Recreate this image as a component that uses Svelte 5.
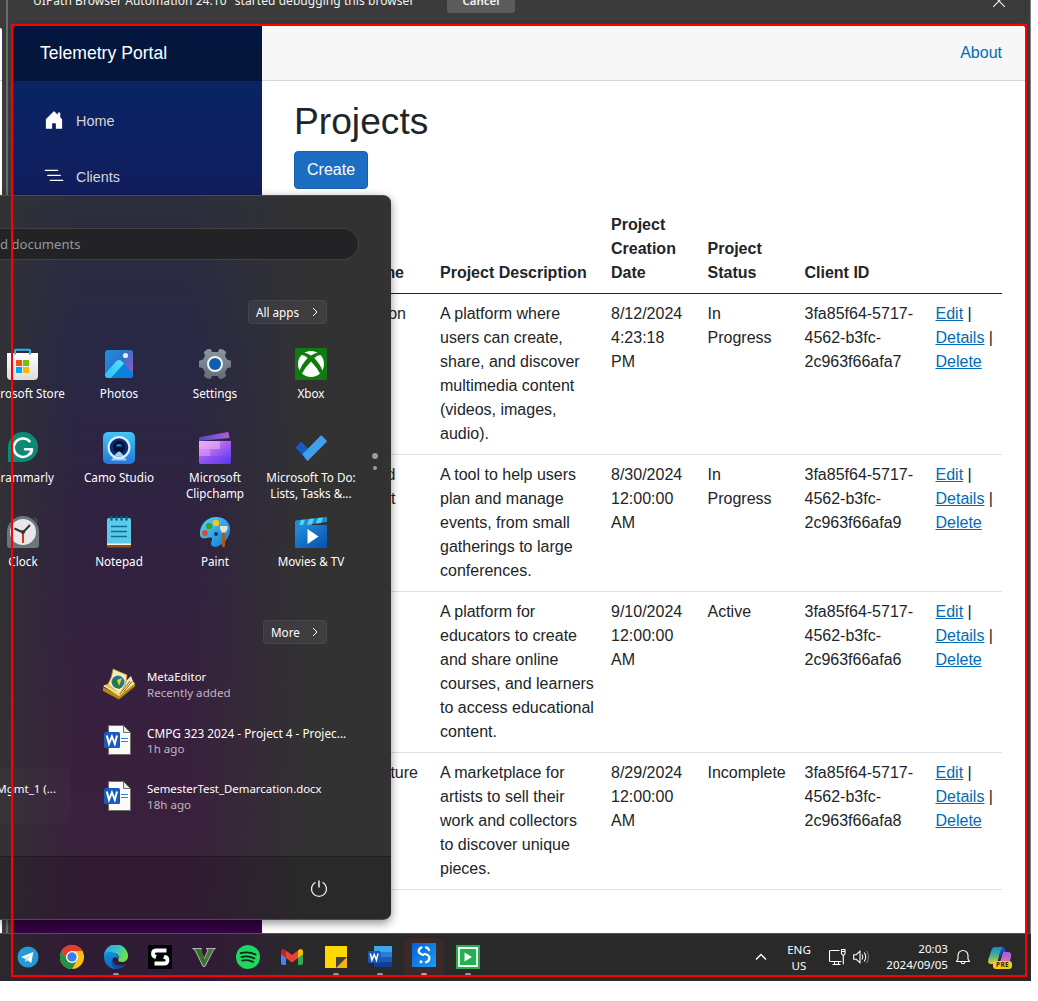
<script>
  const nav = [
    { label: 'Home', d: 'M6.5 14.5v-3.505c0-.245.25-.495.5-.495h2c.25 0 .5.25.5.5v3.5a.5.5 0 0 0 .5.5h4a.5.5 0 0 0 .5-.5v-7a.5.5 0 0 0-.146-.354L13 5.793V2.5a.5.5 0 0 0-.5-.5h-1a.5.5 0 0 0-.5.5v1.293L8.354 1.146a.5.5 0 0 0-.708 0l-6 6A.5.5 0 0 0 1.5 7.5v7a.5.5 0 0 0 .5.5h4a.5.5 0 0 0 .5-.5Z' },
    { label: 'Clients', d: 'M4.5 11.5A.5.5 0 0 1 5 11h10a.5.5 0 0 1 0 1H5a.5.5 0 0 1-.5-.5zm-2-4A.5.5 0 0 1 3 7h10a.5.5 0 0 1 0 1H3a.5.5 0 0 1-.5-.5zm-2-4A.5.5 0 0 1 1 3h10a.5.5 0 0 1 0 1H1a.5.5 0 0 1-.5-.5z' },
  ];

  // `inset` is the free space to the right of the name inside its cell
  const projects = [
    { name: ['on'], inset: 26, desc: 'A platform where users can create, share, and discover multimedia content (videos, images, audio).', date: '8/12/2024 4:23:18 PM', status: 'In Progress', client: '3fa85f64-5717-4562-b3fc-2c963f66afa7' },
    { name: ['d', 't'], inset: 36.5, desc: 'A tool to help users plan and manage events, from small gatherings to large conferences.', date: '8/30/2024 12:00:00 AM', status: 'In Progress', client: '3fa85f64-5717-4562-b3fc-2c963f66afa9' },
    { name: [], inset: 0, desc: 'A platform for educators to create and share online courses, and learners to access educational content.', date: '9/10/2024 12:00:00 AM', status: 'Active', client: '3fa85f64-5717-4562-b3fc-2c963f66afa6' },
    { name: ['ture'], inset: 14, desc: 'A marketplace for artists to sell their work and collectors to\u00a0discover unique pieces.', date: '8/29/2024 12:00:00 AM', status: 'Incomplete', client: '3fa85f64-5717-4562-b3fc-2c963f66afa8' },
  ];

  const apps = [
    ['store', 'Microsoft Store'], ['photos', 'Photos'], ['settings', 'Settings'], ['xbox', 'Xbox'],
    ['grammarly', 'Grammarly'], ['camo', 'Camo Studio'], ['clipchamp', 'Microsoft Clipchamp'], ['todo', 'Microsoft To Do: Lists, Tasks &...'],
    ['clock', 'Clock'], ['notepad', 'Notepad'], ['paint', 'Paint'], ['movies', 'Movies & TV'],
  ];

  const recent = [
    ['meta', 'MetaEditor', 'Recently added'],
    ['doc', 'CMPG 323 2024 - Project 4 - Projec...', '1h ago'],
    ['doc', 'SemesterTest_Demarcation.docx', '18h ago'],
  ];

  const pinned = [
    { icon: 'telegram' }, { icon: 'chrome' }, { icon: 'edge', open: true }, { icon: 'sbox' }, { icon: 'gta' }, { icon: 'spotify' },
    { icon: 'gmail' }, { icon: 'notes', open: true }, { icon: 'word', open: true }, { icon: 'studio', open: true, active: true }, { icon: 'robot', open: true },
  ];
</script>

{#snippet icon(name)}
  {#if name === 'store'}
    <svg viewBox="0 0 32 32">
      <defs><linearGradient id="st" x1="0" y1="0" x2="0" y2="1"><stop offset="0" stop-color="#fff" /><stop offset="1" stop-color="#dcdcdc" /></linearGradient></defs>
      <path d="M0 5h31v23a4 4 0 0 1-4 4H4a4 4 0 0 1-4-4z" fill="url(#st)" />
      <path d="M8 6.500V2.500q0-.7.7-.7h13.600q.7 0 .7.700v4" fill="none" stroke="#2bb5f0" stroke-width="2" />
      <path d="M9 12h6v6H9z" fill="#f25022" /><path d="M16 12h6v6h-6z" fill="#7fba00" /><path d="M9 19h6v6H9z" fill="#00a4ef" /><path d="M16 19h6v6h-6z" fill="#ffb900" />
    </svg>
  {:else if name === 'photos'}
    <svg viewBox="0 0 32 32">
      <defs>
        <linearGradient id="ph" x1="0" y1="0" x2="1" y2=".6"><stop offset="0" stop-color="#1c8fe0" /><stop offset=".6" stop-color="#2d74ca" /><stop offset="1" stop-color="#8a5cc4" /></linearGradient>
        <linearGradient id="pm" x1="0" y1="1" x2="1" y2="0"><stop offset="0" stop-color="#22c4f4" /><stop offset="1" stop-color="#5fdcff" /></linearGradient>
        <clipPath id="pc"><rect x="2" y="2" width="28" height="28" rx="3" /></clipPath>
      </defs>
      <g clip-path="url(#pc)">
        <path d="M2 2h28v28H2z" fill="url(#ph)" />
        <path d="M6 30 14.500 13q1.500-1.500 3.500 0L30 25v5z" fill="#0a7fdb" />
        <path d="M2 26 13.500 13q2.500-2.200 5 0l2.500 2.500L8 30H2z" fill="url(#pm)" />
        <circle cx="22.500" cy="7.500" r="2.600" fill="#f3e8fb" />
      </g>
    </svg>
  {:else if name === 'settings'}
    <svg viewBox="0 0 32 32">
      <defs><linearGradient id="se" x1="0" y1="0" x2="0" y2="1"><stop offset="0" stop-color="#8b969e" /><stop offset="1" stop-color="#626d76" /></linearGradient></defs>
      <path d="M8 1.500 11 1q1 0 1.400 1.200L13 4h6l.6-1.800Q20 1 21 1l3 .6 2.500 1.800q.8.600.4 1.600L26 8l2.500 4 2.500.2q1 .2 1 1.200v5q0 1-1 1.200l-2.500.4L26 24l.9 3q.3 1-.5 1.600L24 30.500l-3 .5q-1 0-1.400-1.200L19 28h-6l-.6 1.800Q12 31 11 31l-3-.5-2.500-1.900q-.8-.6-.5-1.600L6 24l-2.500-4L1 19.600q-1-.2-1-1.200v-5q0-1 1-1.200l2.500-.2L6 8l-.9-3q-.4-1 .4-1.600z" fill="url(#se)" />
      <circle cx="16" cy="16" r="8" fill="#f1f3f5" /><circle cx="16" cy="16" r="6" fill="#0f5fae" />
    </svg>
  {:else if name === 'xbox'}
    <svg viewBox="0 0 32 32">
      <rect width="32" height="32" rx="2" fill="#107c10" />
      <circle cx="16" cy="16" r="13" fill="#fff" />
      <path d="M7 5Q11 4 16 7.500 21 4 25 5l2.300 2.300Q23.500 6 19.300 10 25.500 16.500 27.500 23l-2.300 3Q22 19.500 16 13.500 10 19.500 6.800 26l-2.300-3Q6.500 16.500 12.700 10 8.500 6 4.700 7.300z" fill="#107c10" />
    </svg>
  {:else if name === 'grammarly'}
    <svg viewBox="0 0 32 32">
      <path d="M1 30V15A15 15 0 1 1 16 30z" fill="#0d8a75" />
      <path d="M22.600 9.300A9.200 9.200 0 1 0 25 17.300h-7M21.500 17.300h3.500q-.3 2.600-1.300 4.200" fill="none" stroke="#fff" stroke-width="2.500" stroke-linecap="round" stroke-linejoin="round" />
    </svg>
  {:else if name === 'camo'}
    <svg viewBox="0 0 32 32">
      <defs><linearGradient id="ca" x1="0" y1="0" x2="0" y2="1"><stop offset="0" stop-color="#44c5f6" /><stop offset="1" stop-color="#2377dc" /></linearGradient></defs>
      <rect width="32" height="32" rx="5" fill="url(#ca)" />
      <path d="M8 28.500 10.500 25h11l2.500 3.500z" fill="#9ccdf5" />
      <circle cx="16" cy="15.500" r="11.500" fill="#d8efff" /><circle cx="16" cy="15.500" r="9.300" fill="#0b2a78" />
      <circle cx="16" cy="15" r="6" fill="#07112f" /><path d="M13 14.500a3 2.500 0 0 1 6 0z" fill="#1a87c9" />
      <path d="M11.500 23.500q1-2 2.500-2.500 0-1.500 2-1.500t2 1.500q1.500.5 2.500 2.500-4 2.500-9 0z" fill="#9ccdf5" />
    </svg>
  {:else if name === 'clipchamp'}
    <svg viewBox="0 0 32 32">
      <defs>
        <linearGradient id="cl" x1="0" y1="0" x2="1" y2="1"><stop offset="0" stop-color="#eda5f6" /><stop offset=".5" stop-color="#a45ff0" /><stop offset="1" stop-color="#5330ef" /></linearGradient>
        <linearGradient id="ct" x1="0" y1="0" x2="1" y2="0"><stop offset="0" stop-color="#5148d8" /><stop offset="1" stop-color="#b25bd8" /></linearGradient>
      </defs>
      <path d="M0 9V7q0-1.500 2-2L27.500.2q2-.4 2.300 1.300l.7 4.500z" fill="url(#ct)" />
      <path d="M0 9h32v21a2 2 0 0 1-2 2H2a2 2 0 0 1-2-2z" fill="url(#cl)" />
      <path d="M0 9h21v8H0z" fill="#f3b5fb" opacity=".55" /><path d="M0 17h11v7H0z" fill="#d990fa" opacity=".65" />
      <path d="M0 24h32v6a2 2 0 0 1-2 2H2a2 2 0 0 1-2-2z" fill="#6a3ff0" opacity=".35" />
    </svg>
  {:else if name === 'todo'}
    <svg viewBox="0 0 32 32">
      <path d="M.5 15.500 5.500 10.300q.7-.6 1.400 0L16 19.500l-3.500 9.200z" fill="#185abd" />
      <path d="m7.500 22.300 18-18.500q.7-.6 1.400 0l4.600 4.800q.6.700 0 1.400L13.200 28.600q-.7.600-1.400 0z" fill="#41a0ec" />
    </svg>
  {:else if name === 'clock'}
    <svg viewBox="0 0 32 32">
      <path d="M0 16A16 16 0 0 1 32 16v13a3 3 0 0 1-3 3H3a3 3 0 0 1-3-3z" fill="#6c757d" />
      <path d="m26 1 4 1 1 4-2 1z" fill="#454545" /><circle cx="16" cy="16" r="13" fill="#e7e8e9" />
      <path d="m7.500 12.500 8.500 4 7-7.500" fill="none" stroke="#333" stroke-width="2" /><path d="M16 16v11" stroke="#d8380e" stroke-width="2" /><circle cx="16" cy="16" r="2" fill="#333" />
    </svg>
  {:else if name === 'notepad'}
    <svg viewBox="0 0 32 32">
      <path d="M4 28h24v2a1.500 1.500 0 0 1-1.500 1.500h-21A1.500 1.500 0 0 1 4 30z" fill="#93500f" /><path d="M4 26h24v3H4z" fill="#f6efe6" />
      <path d="M4 4a2 2 0 0 1 2-2h20a2 2 0 0 1 2 2v23.500H4z" fill="#5fcae8" />
      <path d="M8 10.500h16M8 15.500h16M8 20.500h16" stroke="#0a6f98" stroke-width="1.700" />
      <path d="M8.500 1v2.500M13.500 1v2.500M18.500 1v2.500M23.500 1v2.500" stroke="#0b5f82" stroke-width="2.400" stroke-linecap="round" />
    </svg>
  {:else if name === 'paint'}
    <svg viewBox="0 0 32 32">
      <defs><linearGradient id="pa" x1="0" y1="0" x2="1" y2="1"><stop offset="0" stop-color="#5bd6fa" /><stop offset="1" stop-color="#0a77d5" /></linearGradient></defs>
      <path d="M1 19C0 9 8 1 17 1s15 6 14 14-7 14-14 16c-5 0-6-3-4-7 1-3-2-3-5-2-4 1-6.500 0-7-3z" fill="url(#pa)" />
      <circle cx="6" cy="17" r="3" fill="#d8502b" /><circle cx="10" cy="10" r="3.100" fill="#36a11c" /><circle cx="17" cy="7" r="3.200" fill="#fcc419" /><circle cx="17" cy="18" r="2" fill="#17355c" />
      <path d="M23 17h3v13.500q-1.500 1.500-3 0z" fill="#a65a14" /><path d="M21 10h7.500v3l-2 3.500h-3.500l-2-3.500z" fill="#f0e0c5" />
    </svg>
  {:else if name === 'movies'}
    <svg viewBox="0 0 32 32">
      <defs><linearGradient id="mo" x1="0" y1="0" x2="1" y2="1"><stop offset="0" stop-color="#2590e0" /><stop offset="1" stop-color="#084fae" /></linearGradient></defs>
      <path d="M0 6q0-1.500 2-1.700L32 1v5L3 10l-3 3z" fill="#1f8cd0" />
      <path d="m6 4 4-.5-2 6-4 .5zM14 3l5-.5-2 6-5 .5zM23 2l5-.5L26 7l-5 .5z" fill="#52d1fa" />
      <path d="M0 12.500 4 9h28v21.500q0 1.500-1.500 1.500h-29Q0 32 0 30.500z" fill="url(#mo)" />
      <path d="m12.500 13 11 7.500-11 7.500z" fill="#fff" />
    </svg>
  {:else if name === 'meta'}
    <svg viewBox="0 0 32 32">
      <path d="m0 19 16 8 16-12v3.500L16 31.500 0 23z" fill="#b8860b" /><path d="m0 17.500 10-3 18-3 4 4-16 13z" fill="#e5c95a" />
      <path d="m15 28 16-12-3-8-4 4-2 6z" fill="#f5e9b6" /><path d="m17 26 10-13m-6.500 11L29 13.500" stroke="#8b6811" />
      <path d="M5 16Q9 10 10 1l14 6q-1 12-8 19z" fill="#f8edb8" stroke="#b89628" stroke-width=".7" />
      <ellipse cx="15" cy="14" rx="6.500" ry="6.500" fill="#2376a1" /><path d="m9 15 4-6 3 1-2 4 5 5-3 2z" fill="#267d2e" /><path d="m14 12 5-2-3 8z" fill="#e7ce44" />
      <path d="m1 18 15 8" stroke="#fff7cf" />
    </svg>
  {:else if name === 'doc'}
    <svg viewBox="0 0 32 32">
      <path d="M5.500 1.500h15l7 7v22h-22z" fill="#fafafa" stroke="#6f716a" /><path d="M20.500 1.500v7h7z" fill="#e6e6e6" stroke="#6f716a" />
      <path d="M18 14.500h7M18 17.500h7" stroke="#2b8ae0" stroke-width="1.200" />
      <rect x="1" y="8" width="16" height="16" rx="1.500" fill="#185abd" />
      <path d="m3.800 11.500 2.200 8.300L8.900 12.500l2.900 7.300 2.200-8.300" fill="none" stroke="#fff" stroke-width="2" />
    </svg>
  {:else if name === 'telegram'}
    <svg viewBox="0 0 24 24"><circle cx="12" cy="12" r="10.500" fill="#239ad2" /><path d="m5 12 12.300-5-2 11-4.300-3-1.600 2.300L9 13.800z" fill="#fff" /><path d="m9 13.800 6-4.500-4 5.500-1.600 2.500z" fill="#b4d8eb" /></svg>
  {:else if name === 'chrome'}
    <svg viewBox="0 0 24 24">
      <circle cx="12" cy="12" r="12" fill="#fbc117" /><path d="M1.600 6A12 12 0 0 1 22.400 6H12l-5.200 9z" fill="#e33b2e" /><path d="M1.600 6a12 12 0 0 0 10.400 18l5.200-9H6.800z" fill="#229342" />
      <circle cx="12" cy="12" r="6" fill="#fff" /><circle cx="12" cy="12" r="4.700" fill="#3b7ded" />
    </svg>
  {:else if name === 'edge'}
    <svg viewBox="0 0 24 24">
      <defs>
        <linearGradient id="e1" x1="0" y1="0" x2="1" y2=".5"><stop offset="0" stop-color="#249fdf" /><stop offset=".5" stop-color="#33c2d4" /><stop offset="1" stop-color="#6ce04c" /></linearGradient>
        <linearGradient id="e2" x1="0" y1="0" x2="0" y2="1"><stop offset="0" stop-color="#1590dc" /><stop offset="1" stop-color="#0b65c1" /></linearGradient>
      </defs>
      <path d="M0 11A12 12 0 0 1 24 11.500C24 15 21 17 18 17s-4.500-1-3.500-3C16 11 13 8 9 8S0 11 0 11z" fill="url(#e1)" />
      <path d="M0 12c0-5 4.500-6 8-5 4 1 7 4 6.500 7-2-3-6-2-6 1.500C8.500 19 11 22 14 24A12 12 0 0 1 0 12z" fill="url(#e2)" />
      <path d="M9 13c-1 4 2 7.500 7 7.500 3 0 4.500-.8 6.200-1.800-2 3.500-6 5.500-9.700 5.300C7.500 22.500 6 16 9 13z" fill="#124a98" />
    </svg>
  {:else if name === 'sbox'}
    <svg viewBox="0 0 24 24"><path d="M0 0h24v24H0z" fill="#050505" /><path d="M18.500 5.500H8.500q-3.500 0-3.500 3.200t3.500 3.300H16q3.500 0 3.500 3.300t-3.500 3.200H6.500" fill="none" stroke="#fff" stroke-width="3.800" /><path d="m9 9.300 5.500-.8 2 1-1.500 5-5.500.3-2-1.300z" fill="#050505" /></svg>
  {:else if name === 'gta'}
    <svg viewBox="0 0 24 24"><path d="M.5 3.500h9L8.500 5l3.500 9 4-9-2-1.500h9.500L21.500 5 13 21.500h-2L3 5z" fill="#4e6f43" stroke="#c9cfc6" stroke-width=".8" /><path d="m4.500 5 7 14.500 1.500-4L9 5z" fill="#2d7417" /></svg>
  {:else if name === 'spotify'}
    <svg viewBox="0 0 24 24"><circle cx="12" cy="12" r="12" fill="#1ed760" /><path d="M4.800 8.200q7.500-2.200 14.700 1.300M5.500 12q6.500-1.800 12.800 1.300M6.200 15.600q5.700-1.400 10.800 1.200" fill="none" stroke="#15241a" stroke-width="1.900" stroke-linecap="round" /></svg>
  {:else if name === 'gmail'}
    <svg viewBox="0 0 24 24"><path d="M1 6h5v14H3q-2 0-2-2z" fill="#4285f4" /><path d="M18 6h5v12q0 2-2 2h-3z" fill="#34a853" /><path d="M1 6.500Q1 4 3.500 4L6 5.500V13L1 9z" fill="#b52b20" /><path d="m18 5.500 2-1.500q3 0 3 2.500V9l-5 4z" fill="#fbbc04" /><path d="m6 5.500 6 4.500 6-4.500V13l-6 4.500L6 13z" fill="#ea4335" /></svg>
  {:else if name === 'notes'}
    <svg viewBox="0 0 24 24"><path d="M1 1h22v11L12 23H1z" fill="#ffd800" /><path d="M12 12h11v11H12z" fill="#f7b50c" /><path d="M12 12h11L12 23z" fill="#42413f" /></svg>
  {:else if name === 'word'}
    <svg viewBox="0 0 24 24"><path d="M6 1h18v6H6z" fill="#41a5ee" /><path d="M6 7h18v5H6z" fill="#2b7cd3" /><path d="M6 12h18v5H6z" fill="#185abd" /><path d="M6 17h18v5H6z" fill="#103f91" /><rect y="6" width="12.500" height="12" rx="1" fill="#1857b4" /><path d="m2.300 8.500 1.600 6.500L6.200 9.500l2.200 5.500 1.600-6.500" fill="none" stroke="#fff" stroke-width="1.500" /></svg>
  {:else if name === 'studio'}
    <svg viewBox="0 0 24 24">
      <defs><linearGradient id="sd" x1="0" y1="0" x2="1" y2="1"><stop offset="0" stop-color="#0560d8" /><stop offset="1" stop-color="#199cf0" /></linearGradient></defs>
      <path d="M0 0h24v24H0z" fill="url(#sd)" />
      <path d="M9.500 4.500Q6.700 5.700 6.700 8.200q0 2.300 4.500 3.600M12.800 11q4.600 1 4.600 4 0 3-3.400 4.300" fill="none" stroke="#fff" stroke-width="2.300" stroke-linecap="round" />
      <path d="M14 4.300q2.500.8 3 2.700" fill="none" stroke="#fff" stroke-width="2.300" stroke-linecap="round" /><circle cx="9" cy="18.800" r="1.500" fill="#fff" />
    </svg>
  {:else if name === 'robot'}
    <svg viewBox="0 0 24 24"><path d="M0 0h24v24H0z" fill="#22b14c" /><path d="M3 3h18v18H3z" fill="none" stroke="#fff" stroke-width="1.800" /><path d="m8.500 7.500 7.500 4.500-7.500 4.500z" fill="#fff" /></svg>
  {/if}
{/snippet}

<div class="screen">
  <div class="browser">
    <div class="gutter"><div class="behind"></div></div>
    <div class="window">
      <div class="infobar">
        <span class="info">UIPath Browser Automation 24.10" started debugging this browser</span>
        <span class="cancel">Cancel</span>
        <svg class="close" viewBox="0 0 12 12"><path d="m0 0 12 12M12 0 0 12" stroke="#e8e8e8" stroke-width="1.200" /></svg>
      </div>
      <div class="page">
        <aside>
          <div class="brand">Telemetry Portal</div>
          <nav>
            {#each nav as item}
              <div class="navitem"><svg viewBox="0 0 16 16"><path d={item.d} fill="#fff" /></svg>{item.label}</div>
            {/each}
          </nav>
        </aside>
        <main>
          <header><span>About</span></header>
          <article>
            <h1>Projects</h1>
            <button class="create">Create</button>
            <table>
              <colgroup><col class="c1" /><col class="c2" /><col class="c3" /><col class="c4" /><col class="c5" /><col class="c6" /></colgroup>
              <thead>
                <tr><th class="name headname">me</th><th>Project Description</th><th>Project Creation Date</th><th>Project Status</th><th>Client ID</th><th></th></tr>
              </thead>
              <tbody>
                {#each projects as p}
                  <tr>
                    <td class="name" style:padding-right="{p.inset}px">{#each p.name as part}<div>{part}</div>{/each}</td>
                    <td>{p.desc}</td><td>{p.date}</td><td>{p.status}</td><td>{p.client}</td>
                    <td class="actions"><u>Edit</u> | <u>Details</u> | <u>Delete</u></td>
                  </tr>
                {/each}
              </tbody>
            </table>
          </article>
        </main>
      </div>
    </div>
  </div>

  <div class="taskbar">
    <div class="pins">
      {#each pinned as p}
        <div class="pin" class:active={p.active}>{@render icon(p.icon)}{#if p.open}<i></i>{/if}</div>
      {/each}
    </div>
    <div class="tray">
      <svg class="chev" viewBox="0 0 12 8"><path d="m1 6.500 5-5 5 5" fill="none" stroke="#fff" stroke-width="1.400" /></svg>
      <div class="lang">ENG<br />US</div>
      <svg class="net" viewBox="0 0 17 18"><path d="M10.500 2.500h-9q-1 0-1 1v9q0 1 1 1h11M5.500 13.500v3M9.500 13.500v3M3.500 16.500h8M12.500 1.500h3.500v4l-1 1.500h-1.500l-1-1.500zM12.500 3.500h3.500M14.300 7v9.500" fill="none" stroke="#fff" stroke-width="1.100" /></svg>
      <svg class="vol" viewBox="0 0 17 16"><path d="M.7 5.700h2.500l3.800-3.500v11.600l-3.800-3.500H.7z" fill="none" stroke="#fff" stroke-width="1.100" /><path d="M9 5.500q1.600 2.500 0 5M11.200 3.500q3 4.500 0 9" fill="none" stroke="#fff" stroke-width="1.100" /><path d="M13.500 1.800q4 6.200 0 12.400" fill="none" stroke="#777" stroke-width="1.100" /></svg>
      <div class="time">20:03<br />2024/09/05</div>
      <svg class="bell" viewBox="0 0 16 16"><path d="M3 6.500a5 5 0 0 1 10 0V10l1.500 2.500h-13L3 10zM6 13q.3 1.800 2 1.800t2-1.800" fill="none" stroke="#fff" stroke-width="1.100" stroke-linejoin="round" /></svg>
      <div class="copilot">
        <svg viewBox="0 0 24 24">
          <defs>
            <linearGradient id="k1" x1="0" y1="0" x2="0" y2="1"><stop offset="0" stop-color="#1c86dd" /><stop offset=".5" stop-color="#45b58c" /><stop offset="1" stop-color="#efc81c" /></linearGradient>
            <linearGradient id="k2" x1="0" y1="0" x2="0" y2="1"><stop offset="0" stop-color="#a05df0" /><stop offset="1" stop-color="#f4728f" /></linearGradient>
          </defs>
          <path d="M13 1q4 0 5 5h-4l-3 8z" fill="#1c4fd0" /><path d="M7 1h8q-2 1-3 5l-2 8q-1 4-4 4H3q-4 0-2.500-5L3.500 4Q4.500 1 7 1z" fill="url(#k1)" /><path d="M15 6h5q4 0 3 5l-2 7H10q2-1 3-5z" fill="url(#k2)" />
        </svg>
        <b>PRE</b>
      </div>
    </div>
  </div>

  <div class="start">
    <div class="upper">
      <div class="search">d documents</div>
      <div class="chip">All apps <svg viewBox="0 0 6 10"><path d="m1 1 4 4-4 4" fill="none" stroke="#fff" /></svg></div>
      <div class="apps">
        {#each apps as [ic, label]}
          <div class="app">{@render icon(ic)}<span>{label}</span></div>
        {/each}
      </div>
      <div class="chip more">More <svg viewBox="0 0 6 10"><path d="m1 1 4 4-4 4" fill="none" stroke="#fff" /></svg></div>
      <div class="recs">
        <div class="other"><span>Mgmt_1 (...</span></div>
        <div class="list">
          {#each recent as [ic, title, sub]}
            <div class="rec">{@render icon(ic)}<div class:wide={title.startsWith('CMPG')}>{title}<small>{sub}</small></div></div>
          {/each}
        </div>
      </div>
      <div class="dots"><i></i><i></i></div>
    </div>
    <div class="lower">
      <svg viewBox="0 0 18 18"><path d="M5.500 2.200a7.500 7.500 0 1 0 7 0" fill="none" stroke="#eee" stroke-width="1.300" /><path d="M9 .500v7" stroke="#eee" stroke-width="1.500" /></svg>
    </div>
  </div>

  <div class="frame"></div>
</div>

<style>
  :global(body) { margin: 0; background: #fff; }
  .screen { position: relative; width: 1031px; height: 981px; overflow: hidden; display: flex; flex-direction: column; font-family: "Liberation Sans", Arial, sans-serif; }
  .browser { height: 933px; display: flex; background: #3b3b3b; box-sizing: border-box; border-right: 1px solid #808080; }
  .gutter { width: 6px; border-right: 2px solid #6b6b6b; margin-right: 4px; padding-top: 28px; box-sizing: content-box; }
  .behind { width: 2px; height: 905px; background: linear-gradient(#fff 52px, #ccc 52px, #ccc 53px, #fff 53px); border-radius: 0 3px 0 0; }
  .window { width: 1014px; }
  .infobar { height: 22px; margin-bottom: 3px; border-bottom: 1px solid #343434; border-right: 1px solid #343434; border-radius: 0 0 8px 8px; display: flex; align-items: flex-start; padding-left: 21px; box-sizing: border-box; font: 12px/16px "Noto Sans", sans-serif; color: #f4f4f4; overflow: hidden; }
  .info { margin-top: -7px; width: 414px; white-space: nowrap; letter-spacing: 0.06px; }
  .cancel { width: 68px; height: 20px; margin-top: -7px; background: #5b5b5b; border-radius: 3px; text-align: center; font-weight: 600; font-size: 11.5px; }
  .close { width: 12px; height: 12px; margin: -5px 0 0 478px; }
  .page { display: flex; height: 908px; border-radius: 6px 6px 0 0; overflow: hidden; background: #fff; }
  aside { width: 250px; background: linear-gradient(180deg, rgb(5, 39, 103) 0%, #340343 70%); }
  .brand { height: 56px; padding-left: 28px; background: rgba(0, 0, 0, 0.4); color: #fff; font-size: 17.6px; line-height: 57px; }
  nav { padding-top: 12px; }
  .navitem { display: flex; align-items: center; gap: 12px; height: 56px; padding-left: 32px; color: #d7d7d7; font-size: 14.4px; }
  .navitem svg { width: 20px; height: 20px; margin-top: -2px; }
  main { width: 764px; }
  header { height: 55px; border-bottom: 1px solid #d6d5d5; background: #f7f7f7; display: flex; align-items: center; justify-content: flex-end; padding-right: 24px; color: #006bb7; font-size: 16px; }
  article { padding: 17.6px 24px 0 32px; color: #212529; font-size: 16px; line-height: 24px; }
  h1 { margin: 0 0 8px; font-size: 37.2px; line-height: 1.2; font-weight: 400; }
  .create { display: block; height: 38px; padding: 0 12px; background: #1b6ec2; border: 1px solid #1861ac; border-radius: 4px; color: #fff; font: 16px/24px "Liberation Sans", Arial, sans-serif; }
  table { width: 708px; margin-top: 16px; table-layout: fixed; border-collapse: collapse; }
  .c1 { width: 138px; } .c2 { width: 171px; } .c3 { width: 96.5px; } .c4 { width: 97px; } .c5 { width: 131px; } .c6 { width: 74.5px; }
  th, td { padding: 8px; text-align: left; vertical-align: top; border-bottom: 1px solid #dee2e6; }
  th { vertical-align: bottom; border-bottom-color: #212529; }
  .name { text-align: right; }
  .headname { padding-right: 28px; }
  .actions { padding-right: 0; }
  u { color: #006bb7; }

  .taskbar { height: 48px; box-sizing: border-box; border-top: 1px solid #555256; display: flex; justify-content: space-between; background: linear-gradient(90deg, #2b292c 0, #2f1d34 60px, #301b36 210px, #2a292b 300px, #292929 340px); color: #fff; font: 11.6px/16px "Noto Sans", sans-serif; }
  .pins { display: flex; padding-left: 6px; align-items: center; }
  .pin { position: relative; width: 40px; height: 40px; margin: 0 2px; border-radius: 4px; display: flex; align-items: center; justify-content: center; }
  .pin svg { width: 24px; height: 24px; margin-top: -1px; }
  .pin i { position: absolute; left: 17px; top: 35px; width: 6px; height: 3px; border-radius: 2px; background: #9c979d; }
  .active { background: #3a2929; }
  .pin.active svg { margin-top: -6px; }
  .pin.active i { background: #ff8795; }
  .tray { display: flex; align-items: center; padding: 0 19px 1px 0; }
  .chev { width: 12px; height: 8px; margin-right: 19px; }
  .lang { width: 26px; margin-right: 17px; padding-top: 2px; text-align: center; white-space: nowrap; }
  .net { width: 17px; height: 18px; margin-right: 7px; }
  .vol { width: 17px; height: 16px; margin-right: 13px; }
  .time { width: 65px; text-align: right; margin-right: 7px; white-space: nowrap; }
  .bell { width: 16px; height: 16px; margin-right: 17px; }
  .copilot { position: relative; width: 24px; height: 24px; margin-top: 1px; }
  .copilot svg { width: 24px; height: 24px; }
  .copilot b { position: absolute; left: 5px; top: 15px; width: 19px; height: 8px; border-radius: 3px; background: #ffc916; color: #332600; font-size: 6.5px; line-height: 8px; text-align: center; letter-spacing: 0.3px; }

  .start { position: absolute; left: 0; top: 195px; width: 391px; height: 725px; box-sizing: border-box; border: 1px solid #4d4b50; border-left: 0; border-right: 0; border-radius: 0 8px 8px 0; overflow: hidden; box-shadow: 0 3px 10px rgba(0, 0, 0, 0.45); color: #fff; font: 11.5px/16px "Noto Sans", sans-serif; background: linear-gradient(90deg, rgba(50, 50, 51, 0.9) 0, rgba(50, 50, 51, 0.5) 25px, rgba(50, 50, 50, 0) 75px, rgba(50, 50, 50, 0) 190px, rgba(50, 50, 50, 0.5) 250px, #323232 310px), linear-gradient(180deg, #2c2e3d 0, #282845 20%, #302240 48%, #38203d 75%, #3a213c 100%); display: flex; flex-direction: column; }
  .upper { width: 100%; height: 660px; display: flex; flex-direction: column; align-items: flex-end; }
  .search { width: 359px; height: 32px; box-sizing: border-box; margin: 32px 32px 0 0; border: 1px solid #414144; border-left: 0; border-radius: 0 16px 16px 0; background: #232326; color: #99979c; font-size: 13.1px; line-height: 30px; }
  .chip { display: flex; align-items: center; justify-content: space-between; box-sizing: border-box; width: 79px; height: 24px; margin: 40px 64px 0 0; padding: 0 8px 1px 7px; border: 1px solid rgba(255, 255, 255, 0.05); border-radius: 4px; background: rgba(255, 255, 255, 0.06); font-size: 11.7px; }
  .chip svg { width: 6px; height: 10px; }
  .chip.more { width: 64px; margin-top: 28px; }
  .apps { display: grid; grid-template-columns: repeat(4, 96px); grid-auto-rows: 84px; margin: 16px 32px 0 0; text-align: center; }
  .app { display: flex; flex-direction: column; align-items: center; padding-top: 8px; gap: 5px; }
  .app svg { width: 32px; height: 32px; }
  .app span { width: 94px; font-size: 11.7px; }
  .recs { display: flex; align-items: flex-end; width: 100%; margin-top: 12px; }
  .other { width: 71px; height: 56px; background: rgba(255, 255, 255, 0.018); border-radius: 0 4px 4px 0; display: flex; overflow: hidden; }
  .other span { width: 56px; padding-top: 13px; display: flex; justify-content: flex-end; white-space: nowrap; }
  .list { padding-left: 32px; }
  .rec { display: flex; align-items: center; gap: 12px; height: 56px; white-space: nowrap; }
  .rec svg { width: 32px; height: 32px; }
  .rec > div { padding-top: 2px; font-size: 11.4px; }
  .rec > .wide { font-size: 11.8px; }
  small { display: block; font-size: 11.6px; color: #bfb8c0; }
  .dots { position: absolute; left: 372px; top: 257px; width: 6px; display: flex; flex-direction: column; align-items: center; gap: 7px; }
  .dots i { width: 6px; height: 6px; border-radius: 50%; background: #9e9e9e; }
  .dots i + i { width: 4px; height: 4px; }
  .lower { width: 100%; flex: 1; box-sizing: border-box; border-top: 1px solid rgba(0, 0, 0, 0.25); background: rgba(0, 0, 0, 0.16); display: flex; align-items: center; justify-content: flex-end; padding: 2px 63px 0 0; }
  .lower svg { width: 18px; height: 18px; }
  .frame { position: absolute; left: 11px; top: 24px; width: 1012px; height: 949px; border: 2px solid #f00; }
</style>
